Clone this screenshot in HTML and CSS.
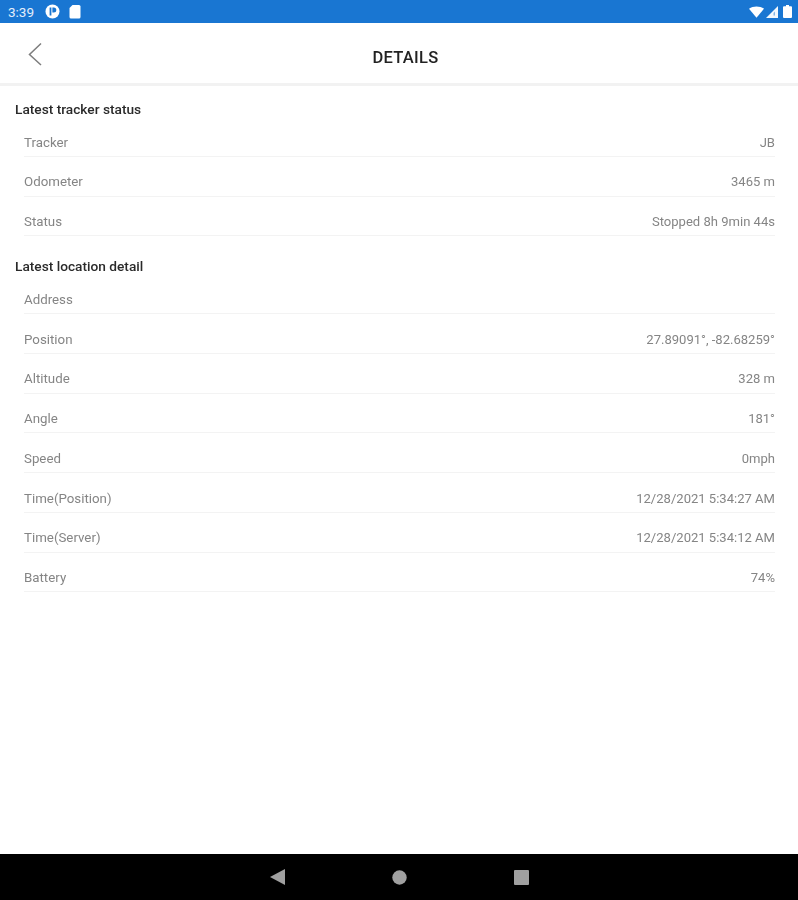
FILE: index.html
```html
<!DOCTYPE html>
<html lang="en">
<head>
  <meta charset="UTF-8">
  <meta name="viewport" content="width=device-width, initial-scale=1.0">
  <title>Details</title>
  <link rel="stylesheet" href="styles.css">
</head>
<body>
  <div class="screen">
    <!-- Android status bar -->
    <div class="status-bar">
      <div class="status-left">
        <span class="clock">3:39</span>
        <svg class="status-icon" width="15" height="15" viewBox="0 0 15 15">
          <circle cx="7.5" cy="7.5" r="7" fill="#fff"/>
          <rect x="4.6" y="3.5" width="1.8" height="8" fill="#1976d2"/>
          <path d="M7.4 3.5h1.4a2.5 2.5 0 0 1 0 5H7.4z" fill="#1976d2"/>
        </svg>
        <svg class="status-icon" width="12" height="15" viewBox="0 0 12 15">
          <path d="M3.5 1H10a1.5 1.5 0 0 1 1.500 1.500V13a1.500 1.500 0 0 1-1.500 1.500H2A1.500 1.500 0 0 1 .5 13V4z" fill="#fff"/>
        </svg>
      </div>
      <div class="status-right">
        <svg width="15" height="12" viewBox="0 0 16 12">
          <path d="M0 2.500C4.500-.8 11.500-.8 16 2.500L8 12z" fill="#fff"/>
        </svg>
        <svg width="12" height="12" viewBox="0 0 12 12">
          <path d="M12 0V12H0z" fill="#fff" opacity="0.95"/>
          <path d="M9 5.500V9.500H7.500V7z" fill="#1976d2" opacity="0.5"/>
        </svg>
        <svg class="battery" width="9" height="13" viewBox="0 0 9 13">
          <path d="M3 0h3v1.200h2a1 1 0 0 1 1 1V12a1 1 0 0 1-1 1H1a1 1 0 0 1-1-1V2.200a1 1 0 0 1 1-1h2z" fill="#fff"/>
        </svg>
      </div>
    </div>

    <!-- Title bar -->
    <div class="header">
      <a class="back-btn" href="#">
        <svg width="16" height="24" viewBox="0 0 16 24">
          <path d="M14 1.500L2.500 12.500L14 23" fill="none" stroke="#7d7d7d" stroke-width="1.500"/>
        </svg>
      </a>
      <h1>DETAILS</h1>
    </div>

    <div class="content">
      <h2 class="section-title">Latest tracker status</h2>
      <div class="row"><span>Tracker</span><span class="value">JB</span></div>
      <div class="row"><span>Odometer</span><span class="value">3465 m</span></div>
      <div class="row"><span>Status</span><span class="value">Stopped 8h 9min 44s</span></div>

      <h2 class="section-title">Latest location detail</h2>
      <div class="row"><span>Address</span><span class="value"></span></div>
      <div class="row"><span>Position</span><span class="value">27.89091°, -82.68259°</span></div>
      <div class="row"><span>Altitude</span><span class="value">328 m</span></div>
      <div class="row"><span>Angle</span><span class="value">181°</span></div>
      <div class="row"><span>Speed</span><span class="value">0mph</span></div>
      <div class="row"><span>Time(Position)</span><span class="value">12/28/2021 5:34:27 AM</span></div>
      <div class="row"><span>Time(Server)</span><span class="value">12/28/2021 5:34:12 AM</span></div>
      <div class="row"><span>Battery</span><span class="value">74%</span></div>
    </div>

    <!-- Android nav bar -->
    <div class="nav-bar">
      <svg width="15" height="16" viewBox="0 0 15 16"><path d="M15 0V16L0 8z" fill="#a0a0a0"/></svg>
      <svg width="15" height="15" viewBox="0 0 15 15"><circle cx="7.500" cy="7.500" r="7.200" fill="#a0a0a0"/></svg>
      <svg width="15" height="15" viewBox="0 0 15 15"><rect width="15" height="15" rx="1" fill="#a0a0a0"/></svg>
    </div>
  </div>
</body>
</html>
```

FILE: styles.css
```css
* {
  margin: 0;
  padding: 0;
  box-sizing: border-box;
  font-family: Roboto, 'Noto Sans', sans-serif;
}

body {
  background-color: white;
}

.screen {
  display: flex;
  flex-direction: column;
  width: 100%;
  height: 900px;
  filter: blur(0.35px);
}

.status-bar {
  display: flex;
  justify-content: space-between;
  align-items: center;
  height: 23px;
  padding: 0 6px 0 8px;
  background-color: #1976d2;
  color: white;
}

.status-left {
  display: flex;
  align-items: center;
}

.clock {
  font-size: 13.5px;
  width: 37px;
  color: #e3eefa;
}

.status-icon + .status-icon {
  margin-left: 9px;
}

.status-right {
  display: flex;
  align-items: center;
  gap: 2px;
}

.battery {
  margin-left: 3px;
}

.header {
  display: flex;
  justify-content: center;
  align-items: center;
  position: relative;
  height: 63px;
  padding: 8px 0 0 13px;
  border-bottom: 3px solid #f2f2f2;
}

.header h1 {
  font-size: 16.5px;
  font-weight: 500;
  letter-spacing: 0.3px;
  color: #222;
}

.back-btn {
  position: absolute;
  left: 27px;
  top: 19px;
}

.content {
  flex: 1;
  padding: 0 23px 0 15px;
}

.section-title {
  font-size: 13.7px;
  font-weight: 500;
  color: #2a2a2a;
  line-height: 16px;
  margin-top: 15px;
}

.row + .section-title {
  margin-top: 22px;
}

.row {
  display: flex;
  justify-content: space-between;
  align-items: flex-start;
  height: 39.75px;
  margin-left: 9px;
  padding-top: 17.5px;
  font-size: 13.3px;
  line-height: 16px;
  color: #858585;
  border-bottom: 1px solid #f3f3f3;
}

.value {
  font-size: 13.05px;
}

.nav-bar {
  display: flex;
  justify-content: center;
  align-items: center;
  gap: 107px;
  height: 46px;
  background-color: black;
}
```
